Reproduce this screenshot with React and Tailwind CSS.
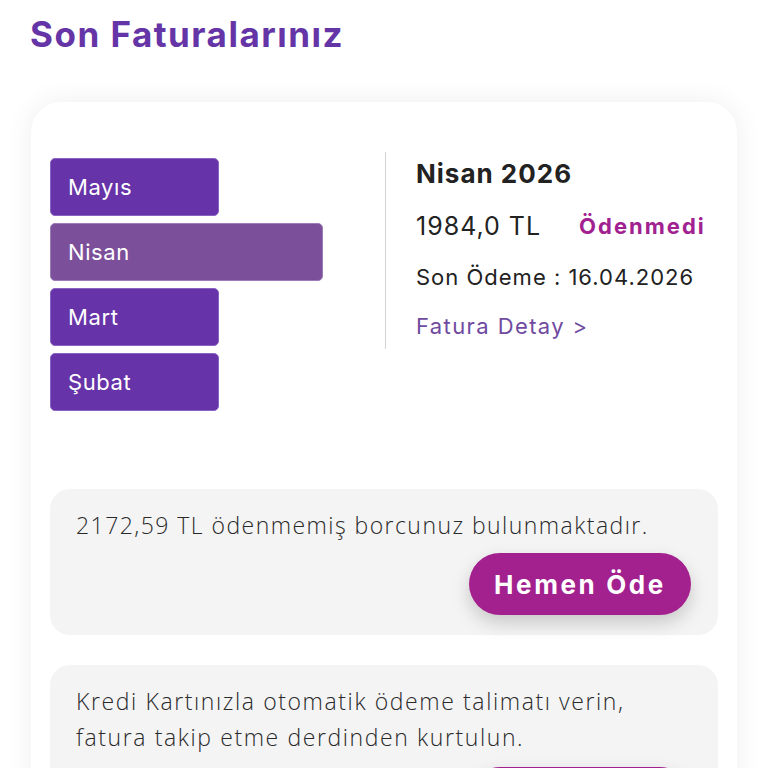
import React from 'react';

const months = [
  { name: 'Mayıs', active: false },
  { name: 'Nisan', active: true },
  { name: 'Mart', active: false },
  { name: 'Şubat', active: false },
];

const head = { fontFamily: 'Inter, "Noto Sans", sans-serif' };
const body = { fontFamily: '"Open Sans", Lato, sans-serif' };

const App = () => {
  return (
    <div className="w-[768px] h-[768px] overflow-hidden bg-white text-[#222]" style={head}>
      <h1 className="px-[30px] pt-[11px] text-[35px] leading-[46px] font-bold text-[#6534a6] tracking-[1.5px]">
        Son Faturalarınız
      </h1>

      <div className="mx-[31px] mt-[45px] rounded-[30px] bg-white shadow-[0_0_28px_rgba(0,0,0,0.07)] px-[19px] pt-[50px] pb-[40px]">
        <div className="flex">
          <div className="w-[335px] flex flex-col items-start gap-[7px] pt-[6px]">
            {months.map(m => (
              <button
                key={m.name}
                className={`h-[58px] rounded-[5px] border text-left pl-[17px] text-[22px] tracking-[0.6px] text-white ${
                  m.active
                    ? 'w-[273px] bg-[#7c4f9b] border-[#9c7bb6]'
                    : 'w-[169px] bg-[#6633a8] border-[#8a63c2]'
                }`}
              >
                {m.name}
              </button>
            ))}
          </div>

          <div className="border-l border-[#d4d4d4] h-[197px] pl-[30px] pt-[4px]">
            <h3 className="text-[26px] leading-[36px] font-bold text-[#222] tracking-[1px]">Nisan 2026</h3>
            <div className="flex items-center mt-[17px]">
              <span className="text-[25px] leading-[34px] text-[#222] tracking-[1px]">1984,0 TL</span>
              <span className="ml-[38px] text-[22px] font-bold text-[#a0218f] tracking-[2px]">Ödenmedi</span>
            </div>
            <p className="mt-[17px] text-[22px] leading-[34px] text-[#222] tracking-[1px]">Son Ödeme : 16.04.2026</p>
            <p className="mt-[15px] text-[22px] leading-[34px] text-[#6f4a9f] tracking-[1.4px]">Fatura Detay &gt;</p>
          </div>
        </div>

        <div className="mt-[78px] rounded-[20px] bg-[#f4f4f5] pl-[26px] pr-[20px] pt-[20px] pb-[20px]">
          <p className="text-[23px] leading-[32px] font-light text-[#2a2a2a] tracking-[1.45px] whitespace-nowrap" style={body}>
            2172,59 TL ödenmemiş borcunuz bulunmaktadır.
          </p>
          <div className="flex justify-end mt-[12px] pr-[7px]">
            <button className="h-[62px] w-[222px] rounded-full bg-[#a3218e] text-white text-[26px] font-bold tracking-[2.6px] shadow-[0_8px_18px_rgba(0,0,0,0.18)]">
              Hemen Öde
            </button>
          </div>
        </div>

        <div className="mt-[30px] rounded-[20px] bg-[#f4f4f5] pl-[26px] pr-[20px] pt-[18px] pb-[20px]">
          <p className="text-[23px] leading-[36px] font-light text-[#2a2a2a] tracking-[1.6px] whitespace-nowrap" style={body}>
            Kredi Kartınızla otomatik ödeme talimatı verin,<br />
            fatura takip etme derdinden kurtulun.
          </p>
          <div className="flex justify-end mt-[12px] pr-[7px]">
            <button className="h-[62px] w-[222px] rounded-full bg-[#a3218e] text-white text-[26px] font-bold tracking-[2.6px] shadow-[0_8px_18px_rgba(0,0,0,0.18)]">
              Talimat Ver
            </button>
          </div>
        </div>
      </div>
    </div>
  );
};

export default App;
